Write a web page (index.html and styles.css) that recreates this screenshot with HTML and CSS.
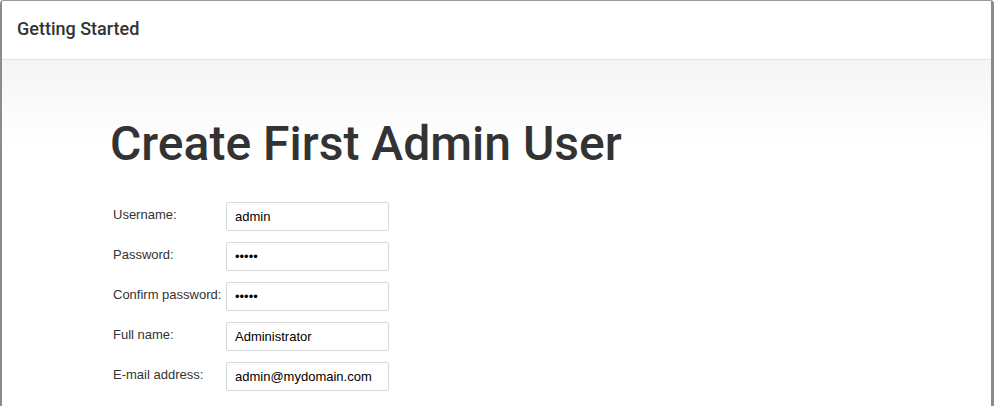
FILE: index.html
```html
<!DOCTYPE html>
<html>
<head>
<meta charset="utf-8">
<link rel="stylesheet" href="styles.css">
</head>
<body>
<div class="window">
  <header class="header">Getting Started</header>
  <main class="content">
    <h1 class="title">Create First Admin User</h1>
    <form class="form">
      <label class="label">Username:</label>
      <div class="field">admin</div>
      <label class="label">Password:</label>
      <div class="field">•••••</div>
      <label class="label">Confirm password:</label>
      <div class="field">•••••</div>
      <label class="label">Full name:</label>
      <div class="field">Administrator</div>
      <label class="label">E-mail address:</label>
      <div class="field">admin@mydomain.com</div>
    </form>
  </main>
</div>
</body>
</html>
```

FILE: styles.css
```css
html, body { margin: 0; padding: 0; background: #fff; }
body { width: 994px; height: 406px; overflow: hidden; }
.window {
  box-sizing: border-box;
  width: 994px;
  height: 420px;
  border: 1px solid #9a9a9a;
  border-left: 2px solid #8c8c8c;
  border-right: 3px solid #8c8c8c;
  border-bottom: none;
  border-radius: 4px 4px 0 0;
  overflow: hidden;
  background: #fff;
}
.header {
  height: 59px;
  border-bottom: 1px solid #e4e4e4;
  padding-left: 15px;
  box-sizing: border-box;
  font-family: Roboto, "Liberation Sans", sans-serif;
  font-weight: 500;
  font-size: 18px;
  color: #333;
  line-height: 56px;
  background: #fff;
}
.content {
  background: linear-gradient(#f5f5f5 0px, #ffffff 90px);
  padding: 54px 0 0 108px;
  height: 400px;
}
.title {
  margin: 0;
  font-family: Roboto, "Liberation Sans", sans-serif;
  font-weight: 500;
  font-size: 48px;
  line-height: 60px;
  color: #333;
}
.form {
  margin-top: 28px;
  display: grid;
  grid-template-columns: 116px 163px;
  row-gap: 11px;
  font-family: "Liberation Sans", Arial, sans-serif;
  font-size: 13px;
}
.label {
  color: #333;
  padding-left: 3px;
  padding-top: 5px;
  line-height: 16px;
}
.field {
  box-sizing: border-box;
  height: 29px;
  border: 1px solid #d9d9d9;
  border-radius: 2px;
  background: #fff;
  padding: 0 8px;
  line-height: 27px;
  color: #000;
  white-space: nowrap;
}
```
